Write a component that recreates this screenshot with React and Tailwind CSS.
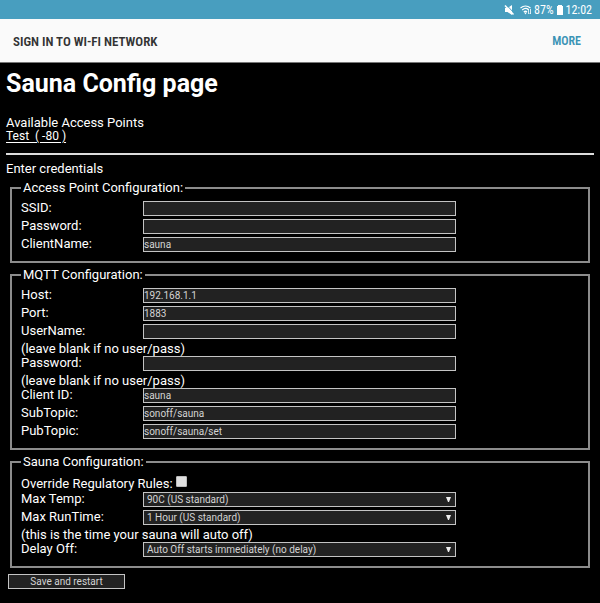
const control =
  'block h-[15px] w-[313px] rounded-none border border-[#c4c4c4] bg-[#222] text-[10px] leading-[13px] text-[#d4d4d4] outline-none';

function Field({ id, label, value = '', type = 'text' }) {
  return (
    <div className="flex h-[18px] items-start">
      <label htmlFor={id} className="w-[122px] shrink-0">{label}</label>
      <input id={id} type={type} defaultValue={value} className={`${control} mt-[2px]`} />
    </div>
  );
}

function Choice({ id, label, option }) {
  return (
    <div className="flex h-[18px] items-start">
      <label htmlFor={id} className="w-[122px] shrink-0">{label}</label>
      <div className="relative mt-[2px]">
        <select id={id} className={`${control} appearance-none pl-[3px]`}>
          <option>{option}</option>
        </select>
        <svg className="pointer-events-none absolute top-[5px] right-[5px]" width="5" height="5" viewBox="0 0 5 5" fill="#eee" aria-hidden="true">
          <path d="M0 0h5L3 5H2z" />
        </svg>
      </div>
    </div>
  );
}

function Note({ children }) {
  return <p className="h-[14px]">{children}</p>;
}

function Group({ title, children }) {
  return (
    <fieldset className="mx-1 border-2 border-[#8c8c8c] px-[9px] pb-2">
      <legend className="px-[2px]">{title}</legend>
      <div className="pt-1 leading-[17px]">{children}</div>
    </fieldset>
  );
}

function StatusBar() {
  return (
    <div className="flex h-[19px] items-center justify-end gap-[2px] bg-[#489ebf] pr-2 font-['Roboto_Condensed','Roboto',sans-serif] text-xs text-white">
      <svg width="11" height="10" viewBox="0 0 11 10" aria-hidden="true">
        <path d="M1 3h2.500L8 0v10L3.500 7H1z" fill="#fff" />
        <path d="M2.500 0l8 8.500" stroke="#489ebf" strokeWidth="1" />
        <path d="M1 .5l8.500 9" stroke="#fff" strokeWidth="1.500" />
      </svg>
      <svg className="ml-[3px]" width="12" height="10" viewBox="0 0 12 10" fill="none" stroke="#fff" strokeWidth="1.200" aria-hidden="true">
        <path d="M.5 3Q5.500-1 10.500 3M2.200 5Q5.500 2 8.500 4.500M3.800 7Q5.500 5.500 7 7" />
        <path d="M4.200 7.500h2.600L5.500 9.500z" fill="#fff" stroke="none" />
        <path d="M8.500 4v5M7.500 5l1-1M10.500 4v5M9.500 8l1 1" strokeWidth=".8" />
      </svg>
      <span>87%</span>
      <svg width="8" height="10" viewBox="0 0 8 10" fill="#fff" aria-hidden="true">
        <path d="M2 0h4v1h1v9H1V1h1z" />
      </svg>
      <span>12:02</span>
    </div>
  );
}

export default function App() {
  return (
    <div className="min-h-screen bg-black font-['Roboto',sans-serif] text-[13px] leading-[15px] text-white">
      <StatusBar />
      <header className="flex h-11 items-center justify-between border-b border-[#777] bg-[#fafafa] pt-px pr-[19px] pl-[13px] font-['Roboto_Condensed','Roboto',sans-serif]">
        <span className="font-semibold text-[#333]">SIGN IN TO WI-FI NETWORK</span>
        <button type="button" className="text-xs font-semibold text-[#3a93b5]">MORE</button>
      </header>
      <main className="px-[6px] pt-[6px]">
        <h1 className="text-[25px] leading-[30px] font-bold">Sauna Config page</h1>
        <h2 className="mt-4">Available Access Points</h2>
        <a href="#test" className="block h-[15px] w-fit text-xs leading-[13px] whitespace-pre underline underline-offset-2">Test  ( -80 )</a>
        <hr className="mt-[8px] border-t-2 border-[#ddd]" />
        <form onSubmit={(e) => e.preventDefault()}>
          <p className="mt-[6px] mb-1">Enter credentials</p>
          <div className="flex flex-col gap-[4px]">
            <Group title="Access Point Configuration:">
              <Field id="ssid" label="SSID:" />
              <Field id="ap-pass" label="Password:" type="password" />
              <Field id="client-name" label="ClientName:" value="sauna" />
            </Group>
            <Group title="MQTT Configuration:">
              <Field id="host" label="Host:" value="192.168.1.1" />
              <Field id="port" label="Port:" value="1883" />
              <Field id="user" label="UserName:" />
              <Note>(leave blank if no user/pass)</Note>
              <Field id="mqtt-pass" label="Password:" type="password" />
              <Note>(leave blank if no user/pass)</Note>
              <Field id="client-id" label="Client ID:" value="sauna" />
              <Field id="sub" label="SubTopic:" value="sonoff/sauna" />
              <Field id="pub" label="PubTopic:" value="sonoff/sauna/set" />
            </Group>
            <Group title="Sauna Configuration:">
              <div className="flex h-[17px] items-start gap-[3px]">
                <label htmlFor="override" className="pt-[2px]">Override Regulatory Rules:</label>
                <input id="override" type="checkbox" className="mt-[3px] size-[11px] appearance-none rounded-[1px] border border-[#bbb] bg-[#e0e0e0] checked:bg-[#489ebf]" />
              </div>
              <Choice id="temp" label="Max Temp:" option="90C (US standard)" />
              <Choice id="runtime" label="Max RunTime:" option="1 Hour (US standard)" />
              <Note>(this is the time your sauna will auto off)</Note>
              <Choice id="delay" label="Delay Off:" option="Auto Off starts immediately (no delay)" />
            </Group>
          </div>
          <button type="submit" className="mt-[6px] ml-[2px] block h-[15px] w-[117px] border border-[#c4c4c4] bg-[#222] text-[10px] leading-[13px] text-[#d4d4d4]">
            Save and restart
          </button>
        </form>
      </main>
    </div>
  );
}
